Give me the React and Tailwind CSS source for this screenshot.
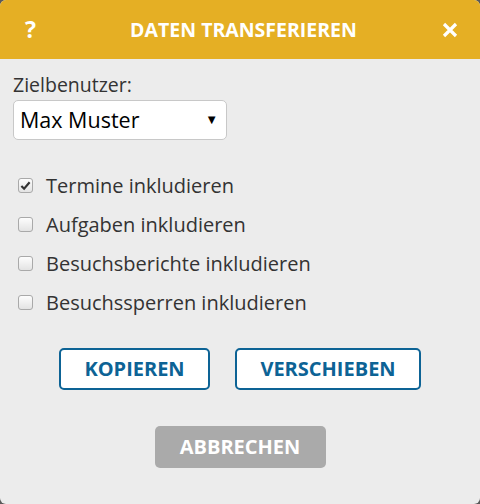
import { useState } from "react";

const OPTIONS = [
  { id: "termine", label: "Termine inkludieren", checked: true },
  { id: "aufgaben", label: "Aufgaben inkludieren", checked: false },
  { id: "berichte", label: "Besuchsberichte inkludieren", checked: false },
  { id: "sperren", label: "Besuchssperren inkludieren", checked: false },
];

function CheckRow({ label, checked, onToggle }) {
  return (
    <label className="flex h-[39px] cursor-pointer items-center gap-[13px]" onClick={onToggle}>
      <span className="ml-[5px] flex h-[15px] w-[15px] items-center justify-center rounded-[3px] border border-[#a9a9a9] bg-gradient-to-b from-[#fdfdfd] to-[#e3e3e3]">
        {checked ? (
          <svg viewBox="0 0 12 12" className="h-[11px] w-[11px]">
            <path d="M1.5 6.5 L4.5 9.5 L10.5 2.5" fill="none" stroke="#333" strokeWidth="2.4" />
          </svg>
        ) : null}
      </span>
      <span className="text-[20px] text-[#333]">{label}</span>
    </label>
  );
}

export default function App() {
  const [checks, setChecks] = useState(OPTIONS.map((o) => o.checked));

  const toggle = (i) => setChecks((c) => c.map((v, j) => (j === i ? !v : v)));

  return (
    <div className="h-[504px] w-[480px] bg-[#5a5a5a] font-['Open_Sans',sans-serif]">
      <div className="flex h-full flex-col overflow-hidden rounded-[6px] bg-[#ececec]">
        {/* Kopfzeile */}
        <div className="flex h-[59px] shrink-0 items-center justify-between bg-[#e5af24] pl-[25px] pr-[22px] text-white">
          <span className="w-[20px] text-[23px] font-bold">?</span>
          <span className="text-[19.5px] font-bold">DATEN TRANSFERIEREN</span>
          <svg viewBox="0 0 16 16" className="h-[16px] w-[16px]">
            <path d="M2 2 L14 14 M14 2 L2 14" stroke="white" strokeWidth="3.2" />
          </svg>
        </div>

        <div className="flex flex-col px-[13px] pt-[13px]">
          <span className="text-[19.5px] leading-[26px] text-[#333]">Zielbenutzer:</span>
          <div className="mt-[2px] flex h-[40px] w-[214px] items-center justify-between rounded-[5px] border border-[#c8c8c8] bg-white pl-[6px] pr-[8px]">
            <span className="text-[21.5px] text-black">Max Muster</span>
            <span className="text-[13px] text-black">▼</span>
          </div>

          <div className="mt-[26px] flex flex-col">
            {OPTIONS.map((o, i) => (
              <CheckRow key={o.id} label={o.label} checked={checks[i]} onToggle={() => toggle(i)} />
            ))}
          </div>
        </div>

        {/* Aktionen */}
        <div className="mt-[26px] flex justify-center gap-[25px]">
          <button className="h-[42px] w-[151px] rounded-[5px] border-2 border-[#0d6395] bg-white text-[20px] font-bold text-[#0d6395]">
            KOPIEREN
          </button>
          <button className="h-[42px] w-[186px] rounded-[5px] border-2 border-[#0d6395] bg-white text-[20px] font-bold text-[#0d6395]">
            VERSCHIEBEN
          </button>
        </div>
        <div className="mt-[36px] flex justify-center">
          <button className="h-[42px] w-[171px] rounded-[5px] bg-[#aaaaaa] text-[20px] font-bold text-white">
            ABBRECHEN
          </button>
        </div>
      </div>
    </div>
  );
}
